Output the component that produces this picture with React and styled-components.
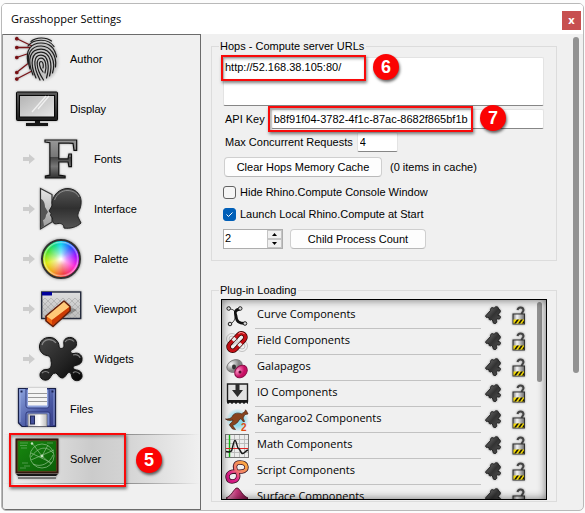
import React from "react";
import styled, { createGlobalStyle, css } from "styled-components";

const GlobalStyle = createGlobalStyle`
  *, *::before, *::after { box-sizing: border-box; }
  body {
    margin: 0;
    background: #fcfcfc;
    color: #000;
    font: 11px/14px "Liberation Sans", Arial, sans-serif;
  }
  button, input, textarea { font: inherit; color: inherit; margin: 0; }
`;

/* ---------- window frame ---------- */

const Page = styled.div`
  height: 100vh;
  min-height: 400px;
  padding: 3px 1px 2px;
`;

const Window = styled.div`
  display: flex;
  flex-direction: column;
  height: 100%;
  border: 1px solid #b9b9b9;
  border-radius: 5px;
  background: #f0f0f0;
  overflow: hidden;
`;

const TitleBar = styled.header`
  display: flex;
  flex: none;
  align-items: center;
  justify-content: space-between;
  height: 30px;
  padding: 0 2px 0 9px;
  background: #fff;
`;

const Title = styled.h1`
  margin: 0;
  font: 400 11px/18px "Open Sans", "Noto Sans", sans-serif;
`;

const CloseButton = styled.button`
  width: 19px;
  height: 19px;
  margin-top: 3px;
  padding: 0 0 2px;
  border: 0;
  background: #c75050;
  color: #fff;
  font: 700 11px/16px "Open Sans", sans-serif;
`;

const Body = styled.div`
  display: flex;
  flex: 1;
  min-height: 0;
`;

/* ---------- callouts ---------- */

const Highlight = styled.span`
  position: absolute;
  left: ${(p) => p.$left}px;
  top: ${(p) => p.$top}px;
  width: ${(p) => p.$width}px;
  height: ${(p) => p.$height}px;
  border: 2px solid #f90a0a;
  box-shadow: 1px 2px 3px rgba(0, 0, 0, 0.5), inset 1px 2px 3px rgba(0, 0, 0, 0.35);
  pointer-events: none;
  z-index: 1;
`;

const Badge = styled.span`
  position: absolute;
  left: ${(p) => p.$left}px;
  top: ${(p) => p.$top}px;
  width: 26px;
  height: 26px;
  border-radius: 50%;
  background: #fb0303;
  box-shadow: 1px 2px 3px rgba(0, 0, 0, 0.6);
  color: #fff;
  font: 700 18px/26px "Liberation Sans", Arial, sans-serif;
  text-align: center;
  z-index: 1;
`;

/* ---------- sidebar ---------- */

const Sidebar = styled.nav`
  flex: none;
  width: 199px;
  border: 1px solid #6b6b6b;
  border-top: 0;
  border-left-color: #999;
  border-bottom-left-radius: 3px;
  box-shadow: inset 0 1px #6b6b6b;
`;

const NavItem = styled.a`
  position: relative;
  display: flex;
  align-items: center;
  height: 50px;
  padding-left: ${(p) => (p.$nested ? 20 : 12)}px;
  color: #000;
  text-decoration: none;
  ${(p) =>
    p.$active &&
    css`
      background:
        linear-gradient(90deg, #f0f0f000, #8a8a8a 45%, #8a8a8a 60%, #f0f0f000) top / 100% 1px no-repeat,
        linear-gradient(90deg, #f0f0f000, #8a8a8a 45%, #8a8a8a 60%, #f0f0f000) bottom / 100% 1px no-repeat,
        linear-gradient(90deg, #f0f0f0, #cbcbcb 45%, #d2d2d2 60%, #f0f0f0);
    `}
`;

const NavIcon = styled.svg`
  flex: none;
  width: 44px;
  height: 46px;
  margin-right: 11px;
  overflow: visible;
  filter: drop-shadow(0 0 1px rgba(0, 0, 0, 0.35));
`;

const Arrow = styled.svg`
  flex: none;
  width: 12px;
  height: 10px;
  margin-right: 4px;
`;

const PaletteWheel = styled.span`
  flex: none;
  width: 40px;
  height: 40px;
  margin: 0 13px 0 2px;
  border: 2px solid #303030;
  border-radius: 50%;
  background:
    radial-gradient(circle, #fff 2%, rgba(255, 255, 255, 0.55) 24%, rgba(255, 255, 255, 0.05) 60%, rgba(255, 255, 255, 0.5) 67%, rgba(255, 255, 255, 0) 70%),
    conic-gradient(#00d0f0, #1848ff 40deg, #a000ff 80deg, #ff20d0 120deg, #f03038 170deg, #f0a010 215deg, #d8e800 255deg, #40e020 300deg, #00d880 335deg, #00d0f0);
  box-shadow: 0 0 3px rgba(0, 0, 0, 0.5);
`;

/* ---------- main panel ---------- */

const Main = styled.main`
  display: flex;
  flex: 1;
  flex-direction: column;
  gap: 22px;
  min-width: 0;
  padding: 5px 0 8px 10px;
`;

const ScrollRail = styled.div`
  flex: none;
  width: 26px;
  padding: 3px 3px 0 16px;
`;

const Thumb = styled.div`
  width: 6px;
  height: ${(p) => p.$height};
  border-radius: 3px;
  background: #929292;
`;

const Group = styled.fieldset`
  display: flex;
  flex-direction: column;
  flex: ${(p) => (p.$fill ? "1" : "none")};
  min-width: 0;
  min-height: 0;
  margin: 0;
  border: 1px solid #dcdcdc;
  padding: ${(p) => (p.$fill ? "2px 9px 1px" : "4px 12px 11px 11px")};
`;

const Legend = styled.legend`
  margin-left: ${(p) => p.$inset}px;
  padding: 0 2px 0 1px;
  line-height: 14px;
`;

const Row = styled.div`
  position: relative;
  display: flex;
  align-items: center;
  gap: ${(p) => p.$gap || 8}px;
  margin-top: ${(p) => p.$above || 0}px;
  padding-left: ${(p) => p.$indent || 0}px;
`;

const field = css`
  border: 1px solid #e3e3e3;
  border-bottom-color: #868686;
  border-radius: 2px;
  background: #fff;
  outline: 0;
`;

const UrlBox = styled.textarea`
  ${field}
  display: block;
  width: 100%;
  height: 49px;
  padding: 2px 1px;
  resize: none;
`;

const TextField = styled.input`
  ${field}
  flex: ${(p) => (p.$fill ? "1" : "none")};
  width: ${(p) => (p.$fill ? "auto" : "41px")};
  min-width: 0;
  height: 20px;
  padding: 0 2px;
`;

const PushButton = styled.button`
  width: ${(p) => p.$width}px;
  height: 20px;
  padding: 0;
  border: 1px solid #cfcfcf;
  border-bottom-color: #b9b9b9;
  border-radius: 4px;
  background: #fdfdfd;
  line-height: 16px;
  white-space: nowrap;
`;

const Check = styled.input`
  flex: none;
  appearance: none;
  width: 13px;
  height: 13px;
  border: 1px solid #626262;
  border-radius: 3px;
  background: #f5f5f5;
  &:checked {
    border-color: #005fb8;
    background: #005fb8 url("data:image/svg+xml,%3Csvg xmlns='http://www.w3.org/2000/svg' viewBox='0 0 11 11'%3E%3Cpath d='M2.5 5.5l2 2 4-4' fill='none' stroke='%23fff'/%3E%3C/svg%3E") center / 11px 11px;
  }
`;

const Spinner = styled.div`
  display: flex;
  width: 60px;
  height: 20px;
  border: 1px solid #adadad;
  background: #fff;
`;

const SpinnerInput = styled.input`
  flex: 1;
  min-width: 0;
  border: 0;
  padding: 0 1px 2px;
  outline: 0;
`;

const SpinnerButtons = styled.div`
  display: grid;
  grid-template-rows: 1fr 1fr;
  width: 15px;
`;

const StepButton = styled.button`
  display: grid;
  place-items: center;
  padding: 0;
  border: 1px solid #c4c4c4;
  background: #f0f0f0;
  svg { display: block; width: 5px; height: 3px; }
`;

/* ---------- plug-in list ---------- */

const ListFrame = styled.div`
  position: relative;
  flex: 1;
  min-height: 0;
  overflow: hidden;
  border: 1px solid #000;
  &::after {
    content: "";
    position: absolute;
    inset: 0;
    box-shadow: inset 0 0 8px rgba(0, 0, 0, 0.55);
    pointer-events: none;
  }
`;

const List = styled.ul`
  margin: 0;
  padding: 3px 20px 0 3px;
  list-style: none;
`;

const Plugin = styled.li`
  display: flex;
  align-items: center;
  height: 26px;
`;

const PluginIcon = styled.svg`
  flex: none;
  width: 24px;
  height: 24px;
  margin-right: 6px;
`;

const PluginName = styled.span`
  flex: 1;
  min-width: 0;
  height: 26px;
  margin-right: 4px;
  padding-left: 2px;
  border-bottom: 1px solid #c2c2c2;
  font: 11px/22px "Open Sans", "Noto Sans", sans-serif;
  white-space: nowrap;
`;

const IconButton = styled.button`
  flex: none;
  width: ${(p) => p.$width}px;
  height: 20px;
  margin-right: ${(p) => p.$after || 0}px;
  padding: 0;
  border: 0;
  background: none;
  svg { display: block; width: 100%; height: 100%; filter: drop-shadow(0 0 1px rgba(0, 0, 0, 0.4)); }
`;

const ListThumb = styled.div`
  position: absolute;
  top: 2px;
  right: 4px;
  width: 5px;
  height: 80px;
  border-radius: 3px;
  background: #929292;
`;

/* ---------- sidebar icons ---------- */

const AuthorIcon = () => (
  <NavIcon viewBox="0 0 44 46">
    <defs>
      <radialGradient id="print-shade">
        <stop offset="0.5" stopColor="#c8c8c8" />
        <stop offset="1" stopColor="#c8c8c8" stopOpacity="0" />
      </radialGradient>
    </defs>
    <ellipse cx="28" cy="25" rx="17" ry="21" fill="url(#print-shade)" />
    <g stroke="#7a1418" strokeWidth="1.3" fill="#6c0a0e">
      <path d="M1.5 2.5L17 10M1.5 11.5H15M1.5 21.5L12 18M1.5 36.5L13 27.5M1.5 43L17 35" fill="none" />
      <circle cx="1.8" cy="2.7" r="1.2" /><circle cx="1.8" cy="11.5" r="1.2" /><circle cx="1.8" cy="21.5" r="1.2" />
      <circle cx="1.8" cy="36.5" r="1.2" /><circle cx="1.8" cy="43" r="1.2" />
    </g>
    <g fill="none" stroke="#1c1c1c" strokeWidth="1.2" strokeLinecap="round">
      <path d="M16 5.5C21 1 31 .8 36.500 5" />
      <path d="M13 10C18 3 33 1.500 39 10.500" />
      <path d="M13 27C10 13 17 7 26 7C35 7 40 13 41.500 21" />
      <path d="M15 33C10 17 17 10 26 10C36 10 42 20 40.500 31" />
      <path d="M18 39C11 22 16 13.200 26 13.200C36 13.200 41 26 37.500 37" />
      <path d="M21 42C14 26 17 16.200 26 16.200C35 16.200 38 28 34.500 40" />
      <path d="M25 44C17 28 19 19.200 26 19.200C33 19.200 35 30 31.500 42" />
      <path d="M28.500 44C20 31 21 22.200 26 22.200C31 22.200 32 31 30 37" />
      <path d="M28 36C24 31 23.500 25.500 26 25.500C28.500 25.500 28.500 30 28 32" />
    </g>
  </NavIcon>
);

const DisplayIcon = () => (
  <NavIcon viewBox="0 0 44 46">
    <defs>
      <linearGradient id="frame" x2="0" y2="1"><stop stopColor="#5a5a5a" /><stop offset="1" stopColor="#1c1c1c" /></linearGradient>
      <linearGradient id="screen" x2="1" y2="1"><stop stopColor="#b4b4b4" /><stop offset="1" stopColor="#e6e6e6" /></linearGradient>
    </defs>
    <rect x="1.500" y="6" width="41" height="28.500" rx="1" fill="url(#frame)" stroke="#050505" />
    <rect x="4.500" y="9.500" width="35" height="21.500" fill="url(#screen)" stroke="#080808" />
    <path d="M31 10L17 26M34 10L23 23" stroke="#fff" strokeWidth="1.300" opacity="0.7" />
    <path d="M20 35h5v2h8v3H11v-3h9z" fill="#161616" />
  </NavIcon>
);

const FontsIcon = () => (
  <NavIcon viewBox="0 0 44 46">
    <defs>
      <linearGradient id="metal" x2="0" y2="1">
        <stop offset="0.15" stopColor="#a0a0a0" /><stop offset="0.47" stopColor="#777" />
        <stop offset="0.48" stopColor="#444" /><stop offset="0.62" stopColor="#777" /><stop offset="0.85" stopColor="#1c1c1c" />
      </linearGradient>
    </defs>
    <text x="5" y="42" fontFamily="Liberation Serif, serif" fontWeight="700" fontSize="58" fill="url(#metal)" stroke="#111" strokeWidth="1.200">F</text>
  </NavIcon>
);

const InterfaceIcon = () => (
  <NavIcon viewBox="0 0 44 46">
    <defs>
      <linearGradient id="head" x2="0" y2="1"><stop stopColor="#555" /><stop offset="0.5" stopColor="#303030" /><stop offset="1" stopColor="#555" /></linearGradient>
      <linearGradient id="mirror" x2="0" y2="1"><stop stopColor="#e8e8e8" /><stop offset="1" stopColor="#999" /></linearGradient>
    </defs>
    <path d="M1.500 2.500L13 8.500V36L1.500 43z" fill="url(#mirror)" stroke="#333" strokeWidth="1.200" />
    <path d="M2 13C5 14 6 18 6 21L9 26L7 29C7 32 5 34 4 34L5 40L2 42z" fill="#555" />
    <path d="M14 13C17 5 24 2.500 29 2.500C38 3 43 10 42 18C41.500 24 38 27 39 31L42 37C38 41 31 43 25 42C25 39 23 37 19 37.500C14 39 13.500 36 13.500 32L11.500 29.500L12 27.500L10 25L13.500 19C12.500 17 13 15 14 13z" fill="url(#head)" stroke="#222" />
    <path d="M15.500 14C18 7 24 4.500 28 4.500C34 4.500 38 7 40 11" fill="none" stroke="#aaa" opacity="0.7" />
  </NavIcon>
);

const ViewportIcon = () => (
  <NavIcon viewBox="0 0 44 46">
    <defs>
      <pattern id="mesh" width="6" height="6" patternUnits="userSpaceOnUse"><path d="M0 0L6 6M6 0L0 6" stroke="#aaa" strokeWidth="0.7" /></pattern>
      <linearGradient id="paper" x2="0" y2="1"><stop stopColor="#dedede" /><stop offset="1" stopColor="#bbb" /></linearGradient>
    </defs>
    <rect x="2.700" y="6" width="39" height="26.500" fill="url(#paper)" />
    <rect x="2.700" y="12" width="39" height="20" fill="url(#mesh)" />
    <path d="M28 20L38 24L24 32H18z" fill="#555" opacity="0.5" />
    <rect x="2.700" y="6" width="39" height="26.500" fill="none" stroke="#252b3c" strokeWidth="1.400" />
    <path d="M3 6h10v3.500H3z" fill="#00009b" />
    <g stroke="#65200c" strokeLinejoin="round">
      <path d="M7 30L25 15L31 20.500V25L14 40.500L7 35z" fill="#ee6411" />
      <path d="M7 30L25 15L31 20.500L13 34z" fill="#ffc978" stroke="none" />
      <path d="M13 34V40L31 25V20.500z" fill="#cc3b05" stroke="none" />
      <path d="M7 30L25 15L31 20.500V25L14 40.500L7 35z" fill="none" strokeWidth="1.400" />
    </g>
  </NavIcon>
);

const WidgetsIcon = () => (
  <NavIcon viewBox="0 0 44 46">
    <defs>
      <linearGradient id="ink" x2="1" y2="1"><stop stopColor="#464646" /><stop offset="0.6" stopColor="#222" /><stop offset="1" stopColor="#050505" /></linearGradient>
    </defs>
    <path
      d="M10 1.500C16 1 20 6 20 10C20 13 23 13 24.500 11.500C26 9.500 23 5 27 2.500C31 0 37.500 2 37.500 7.500C37.500 12 34 13 32.500 14C30.500 15.500 32 18 35 17.500C40 16 43.500 19.500 43 23.500C43 28 39 29 36 29.500C33 31 34 33 37 34C41 34 43.500 37 43 41C42 45 36 46 33.500 42.500C32 40 33 37 30.500 36.500C27.500 36 27 42 23 42C19 41.500 19 37 16.500 37C13 37 12.500 40 10.500 42.500C7 46 1 43.500 1 39C1 35 5 33 8 33.500C12 33 13 29 12 25C12 21 10 20 8 19.500C4 19 0.500 15.500 0.500 11C0.500 5 5 1.500 10 1.500z"
      fill="url(#ink)" stroke="#111"
    />
    <path d="M3 9C5 2.500 13 2 17 7M26 6C28 2.500 33 3 35 5.500M34 19C38 18 41 20 41 22M3 37C5 35 8 35 10 37M34 37C36 35 39 36 41 38" fill="none" stroke="#aaa" strokeWidth="1.200" opacity="0.7" />
  </NavIcon>
);

const FilesIcon = () => (
  <NavIcon viewBox="0 0 44 46">
    <defs>
      <linearGradient id="disk" x2="1" y2="1"><stop stopColor="#8ea6e0" /><stop offset="0.6" stopColor="#4a59a4" /><stop offset="1" stopColor="#343a86" /></linearGradient>
      <linearGradient id="shutter" x2="1"><stop stopColor="#c8c8d0" /><stop offset="0.6" stopColor="#fff" /><stop offset="1" stopColor="#bbb" /></linearGradient>
    </defs>
    <path d="M3.500 2.500h37V40.500H7L3.500 37z" fill="url(#disk)" stroke="#182048" strokeWidth="1.200" />
    <path d="M5 4v32M39 4v35" stroke="#a7b7ea" opacity="0.7" />
    <path d="M11 3h23v17q0 2-2 2H13q-2 0-2-2z" fill="#8da1dd" stroke="#303c80" />
    <rect x="13" y="2" width="19" height="17.500" fill="#f4f4f4" />
    <path d="M13 7.500h19M13 11.500h19M13 15.500h19" stroke="#999" />
    <path d="M5.500 4.500h2v2h-2zM36.500 4.500h2v2h-2z" fill="#1c2555" />
    <path d="M11 40V28q0-2 2-2h20q2 0 2 2v12z" fill="#7487ce" stroke="#2d3777" />
    <rect x="13" y="28" width="19" height="12.500" fill="url(#shutter)" stroke="#555" strokeWidth="0.600" />
    <rect x="15.500" y="30" width="4" height="8" fill="#44509b" stroke="#202858" />
  </NavIcon>
);

const SolverIcon = () => (
  <NavIcon viewBox="0 0 44 46">
    <defs><linearGradient id="board" x2="1" y2="1"><stop stopColor="#188a0f" /><stop offset="1" stopColor="#0a5c08" /></linearGradient></defs>
    <rect x="1.500" y="3.500" width="41" height="33" fill="url(#board)" stroke="#32190f" strokeWidth="2" />
    <rect x="2.800" y="4.800" width="38.500" height="30.500" fill="none" stroke="#6d3a22" strokeWidth="0.700" />
    <g fill="none" stroke="#8fc18a" strokeWidth="0.700">
      <circle cx="27" cy="20" r="12" />
      <path d="M17 7L27 20L36 28M16 24L39 14M16 17L37 27M27 20L33 9M16 21C24 10 32 10 38 17M18 28C26 32 35 27 38 19" />
      <path d="M5 7h8M5 9.500h7M6 12h6M7 27h6M9 30h6M32 7h6M5 32h6" opacity="0.700" />
    </g>
    <circle cx="17" cy="7.500" r="1.200" fill="#c4e4bf" /><circle cx="27" cy="20" r="1.500" fill="#c4e4bf" />
    <path d="M1 38h42l-2 2H3z" fill="#161616" /><path d="M3 40h38v2H3z" fill="#c5c5c5" /><path d="M3 41.500h38v1H3z" fill="#333" />
  </NavIcon>
);

/* ---------- plug-in icons ---------- */

const CurveArt = () => (
  <>
    <path d="M4 5C9 5 10 7 10 11S10 17 5.500 20" fill="none" stroke="#444" />
    <path d="M15 5C9 6 10 9 11 12C11.500 18 14 19 20 19.500" fill="none" stroke="#111" strokeWidth="2.800" />
    <g fill="#ddd" stroke="#222"><circle cx="3.700" cy="4.500" r="1.800" /><circle cx="15.200" cy="4.500" r="1.800" /><circle cx="5" cy="20" r="1.800" /><circle cx="20" cy="19.500" r="1.800" /></g>
  </>
);

const FieldArt = () => (
  <>
    <g fill="none" stroke="#b5b5b5" strokeWidth="0.800"><circle cx="7" cy="9" r="5.500" /><circle cx="7" cy="9" r="3" /><circle cx="17" cy="16" r="5.500" /><circle cx="17" cy="16" r="3" /></g>
    <g transform="translate(12 12) rotate(-47)" fill="none">
      <rect x="-10.500" y="-4" width="21" height="8" rx="4" stroke="#300" strokeWidth="4.600" />
      <rect x="-10.500" y="-4" width="21" height="8" rx="4" stroke="#c41016" strokeWidth="3.200" />
      <path d="M-2 -4H2M-2 4H2" stroke="#e7e7e7" strokeWidth="3.200" />
      <path d="M7 -4.500Q10.500 -4.500 11 0" stroke="#ff8a8a" />
    </g>
  </>
);

const GalapagosArt = () => (
  <>
    <defs>
      <radialGradient id="cell" cx=".35" cy=".25"><stop stopColor="#fff" /><stop offset="1" stopColor="#858585" /></radialGradient>
      <radialGradient id="pinkcell" cx=".4" cy=".25"><stop stopColor="#ff9ccc" /><stop offset="1" stopColor="#c80f64" /></radialGradient>
    </defs>
    <ellipse cx="9.500" cy="10" rx="8" ry="6" transform="rotate(-25 9.500 10)" fill="url(#cell)" stroke="#777" strokeWidth="0.800" />
    <ellipse cx="9" cy="11" rx="2" ry="2.400" fill="#333" />
    <ellipse cx="16" cy="15.500" rx="7" ry="5.500" transform="rotate(-45 16 15.500)" fill="url(#pinkcell)" stroke="#8a1048" />
    <circle cx="15" cy="16" r="1.500" fill="#5c0c30" />
  </>
);

const IOArt = () => (
  <>
    <path d="M2.500 2h20v17h-20z" fill="#e2e2e2" stroke="#222" strokeWidth="1.400" />
    <path d="M2 18h21v4l-2-1.500-2 1.500-2-1.500-2 1.500-2-1.500-2 1.500-2-1.500-2 1.500-2-1.500-2 1.500-1-1z" fill="#191919" />
    <path d="M10.500 2h4v6h3.500l-5.500 7-5.500-7h3.500z" fill="#2c2c2c" />
  </>
);

const KangarooArt = () => (
  <>
    <defs><radialGradient id="sky"><stop offset="0.500" stopColor="#8fd9ea" /><stop offset="1" stopColor="#8fd9ea" stopOpacity="0" /></radialGradient></defs>
    <circle cx="12.500" cy="12" r="11.500" fill="url(#sky)" />
    <path d="M23 6L21.500 3L20.500 1.800L20 3.500C18.500 4 18 5.500 16.500 5.800C13 4.500 9 5 7.500 8C6 11 3 11 .5 11C3 13 6 12.500 8 12C7.500 15 4.500 15.500 4.500 17L7.500 21L10.500 21.500L7.500 17.500C10.500 16.500 13 14.500 14 12L16 10.500L18 13.500H19.500L18 10C19 8.500 19 7.500 20 6.500z" fill="#88441e" stroke="#4a210e" strokeWidth="0.700" />
    <text x="16" y="23" fontFamily="Liberation Sans, sans-serif" fontSize="10" fontWeight="700" fill="#e04c10">2</text>
  </>
);

const MathArt = () => (
  <>
    <rect x="0.500" y="0.500" width="23" height="23" fill="#ececec" stroke="#777" />
    <path d="M9.500 1v22M14.500 1v22M19.500 1v22M1 5.500h22M1 9.500h22M1 18.500h22" stroke="#b8b8b8" strokeWidth="0.900" />
    <path d="M4.500 1v22" stroke="#12b412" strokeWidth="1.400" /><path d="M1 14.500h22" stroke="#e02424" strokeWidth="1.200" />
    <path d="M1 17.500L4 18L6.500 17C8 13 8.500 6.500 10 6.500S12 14 13.500 14.500S15 17 17 19.500C19 20 20 17 23 16" fill="none" stroke="#181818" strokeWidth="1.400" />
  </>
);

const ScriptArt = () => (
  <>
    <defs><linearGradient id="ribbon" x1="1" y1="0" x2="0" y2="1"><stop stopColor="#ffb03a" /><stop offset="0.450" stopColor="#f07a70" /><stop offset="0.700" stopColor="#e0288e" /><stop offset="1" stopColor="#c80f78" /></linearGradient></defs>
    {["#3a1424", "url(#ribbon)"].map((stroke, i) => (
      <path key={stroke} d="M12 12C9 8 9 2.500 15 2.500C23 2.500 23.500 11 17 11.500C12 12 9 10.500 5 12.500C1 15 2 21.500 7 21.500C13 21.500 14.500 16 12 12" fill="none" stroke={stroke} strokeWidth={i ? 2.800 : 4.400} strokeLinecap="round" />
    ))}
  </>
);

const SurfaceArt = () => (
  <>
    <defs><linearGradient id="hill" x2="1"><stop stopColor="#f2a0c6" /><stop offset="0.500" stopColor="#c23679" /><stop offset="1" stopColor="#74123f" /></linearGradient></defs>
    <path d="M1 12C7 10 9 2 12 2S17 10 23 12L14 21z" fill="url(#hill)" stroke="#56102f" />
  </>
);

const PuzzleIcon = () => (
  <svg viewBox="0 0 16 20">
    <defs><linearGradient id="piece" x2="1" y2="1"><stop stopColor="#777" /><stop offset="0.500" stopColor="#333" /><stop offset="1" stopColor="#555" /></linearGradient></defs>
    <path d="M.5 10L5.500 4.500C5 2 7.500 .5 9 2.500C10 0 13.500 0 13.500 3C16 3.500 16 7 13.500 7.500L13 9.500C15.500 9 16 11.500 15 12.500C14 13.500 12.500 13 12 12.500L11 14C12.500 15.500 11.500 17.500 10 17.500C8 17.500 7.500 16 8 15L6.500 13.500C5.500 14.500 3.500 14 4 12L3 11C2 12 1 11.500.5 10z" fill="url(#piece)" stroke="#1b1b1b" strokeWidth="0.900" />
  </svg>
);

const LockIcon = () => (
  <svg viewBox="0 0 14 20">
    <defs><linearGradient id="steel" x2="1"><stop stopColor="#777" /><stop offset="0.350" stopColor="#f6f6f6" /><stop offset="0.700" stopColor="#aaa" /><stop offset="1" stopColor="#666" /></linearGradient></defs>
    <path d="M5.500 4C6 0.800 11 0.500 11.500 4C11.500 6 9.500 6 9.500 9" fill="none" stroke="#444" strokeWidth="2" />
    <rect x="1" y="8" width="11.500" height="10" fill="url(#steel)" stroke="#333" />
    <path d="M1.500 13.500h10.500v4H1.500z" fill="#f6db00" />
    <path d="M2 17.500l3-4h2l-3 4zM6 17.500l3-4h2l-3 4zM10 17.500l2-3v3z" fill="#16150a" />
  </svg>
);

/* ---------- data ---------- */

const sections = [
  { label: "Author", Icon: AuthorIcon },
  { label: "Display", Icon: DisplayIcon },
  { label: "Fonts", Icon: FontsIcon, nested: true },
  { label: "Interface", Icon: InterfaceIcon, nested: true },
  { label: "Palette", Icon: PaletteWheel, nested: true },
  { label: "Viewport", Icon: ViewportIcon, nested: true },
  { label: "Widgets", Icon: WidgetsIcon, nested: true },
  { label: "Files", Icon: FilesIcon },
  { label: "Solver", Icon: SolverIcon, active: true },
];

const plugins = [
  ["Curve Components", CurveArt],
  ["Field Components", FieldArt],
  ["Galapagos", GalapagosArt],
  ["IO Components", IOArt],
  ["Kangaroo2 Components", KangarooArt],
  ["Math Components", MathArt],
  ["Script Components", ScriptArt],
  ["Surface Components", SurfaceArt],
];

export default function App() {
  return (
    <Page>
      <GlobalStyle />
      <Window>
        <TitleBar>
          <Title>Grasshopper Settings</Title>
          <CloseButton aria-label="Close">x</CloseButton>
        </TitleBar>
        <Body>
          <Sidebar>
            {sections.map(({ label, Icon, nested, active }) => (
              <NavItem key={label} href={`#${label.toLowerCase()}`} $nested={nested} $active={active}>
                {nested && (
                  <Arrow viewBox="0 0 12 10"><path d="M0 3h6V0l6 5-6 5V7H0z" fill="#cdcdcd" /></Arrow>
                )}
                <Icon />
                {label}
                {active && (
                  <>
                    <Highlight $left={6} $top={-1} $width={117} $height={54} />
                    <Badge $left={133} $top={13}>5</Badge>
                  </>
                )}
              </NavItem>
            ))}
          </Sidebar>
          <Main>
            <Group>
              <Legend $inset={-4}>Hops - Compute server URLs</Legend>
              <Row>
                <UrlBox aria-label="Compute server URLs" spellCheck={false} defaultValue="http://52.168.38.105:80/" />
                <Highlight $left={-2} $top={-2} $width={145} $height={26} />
                <Badge $left={150} $top={-3}>6</Badge>
              </Row>
              <Row $above={3} $gap={6} $indent={2}>
                <label htmlFor="api-key">API Key</label>
                <TextField id="api-key" $fill spellCheck={false} defaultValue="b8f91f04-3782-4f1c-87ac-8682f865bf1b" />
                <Highlight $left={45} $top={-3} $width={205} $height={26} />
                <Badge $left={257} $top={-4}>7</Badge>
              </Row>
              <Row $above={3} $gap={4} $indent={2}>
                <label htmlFor="max-requests">Max Concurrent Requests</label>
                <TextField id="max-requests" defaultValue="4" />
              </Row>
              <Row $above={5} $indent={1}>
                <PushButton $width={158}>Clear Hops Memory Cache</PushButton>
                <span>(0 items in cache)</span>
              </Row>
              <Row $above={8} $gap={4}>
                <Check type="checkbox" id="hide-console" />
                <label htmlFor="hide-console">Hide Rhino.Compute Console Window</label>
              </Row>
              <Row $above={8} $gap={4}>
                <Check type="checkbox" id="launch-local" defaultChecked />
                <label htmlFor="launch-local">Launch Local Rhino.Compute at Start</label>
              </Row>
              <Row $above={8} $gap={7}>
                <Spinner>
                  <SpinnerInput aria-label="Child process count" defaultValue="2" />
                  <SpinnerButtons>
                    <StepButton aria-label="Increase"><svg viewBox="0 0 5 3"><path d="M0 3l2.500-3L5 3z" /></svg></StepButton>
                    <StepButton aria-label="Decrease"><svg viewBox="0 0 5 3"><path d="M0 0l2.500 3L5 0z" /></svg></StepButton>
                  </SpinnerButtons>
                </Spinner>
                <PushButton $width={136}>Child Process Count</PushButton>
              </Row>
            </Group>
            <Group $fill>
              <Legend $inset={-2}>Plug-in Loading</Legend>
              <ListFrame>
                <List>
                  {plugins.map(([name, Art]) => (
                    <Plugin key={name}>
                      <PluginIcon viewBox="0 0 24 24"><Art /></PluginIcon>
                      <PluginName>{name}</PluginName>
                      <IconButton $width={16} $after={11} aria-label={`${name} plug-in`}><PuzzleIcon /></IconButton>
                      <IconButton $width={14} aria-label={`${name} load protection`}><LockIcon /></IconButton>
                    </Plugin>
                  ))}
                </List>
                <ListThumb />
              </ListFrame>
            </Group>
          </Main>
          <ScrollRail><Thumb $height="71%" /></ScrollRail>
        </Body>
      </Window>
    </Page>
  );
}
